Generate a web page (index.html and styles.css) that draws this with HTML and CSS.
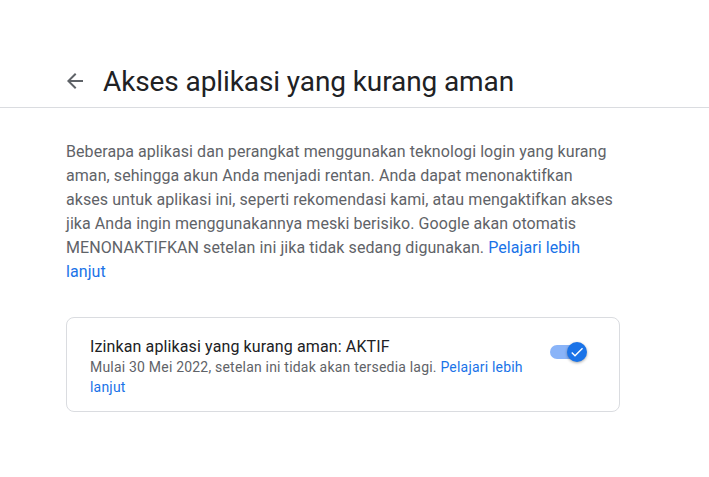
FILE: index.html
```html
<!DOCTYPE html>
<html>
<head>
  <meta charset="UTF-8">
  <title>Akses aplikasi yang kurang aman</title>
  <link rel="stylesheet" href="styles.css">
</head>
<body>
  <header class="top">
    <a class="back" href="#" aria-label="Kembali">
      <svg width="24" height="24" viewBox="0 0 24 24"><path d="M20 11H7.83l5.59-5.59L12 4l-8 8 8 8 1.41-1.41L7.83 13H20v-2z" fill="#5f6368"/></svg>
    </a>
    <h1>Akses aplikasi yang kurang aman</h1>
  </header>
  <main class="content">
    <p class="intro">Beberapa aplikasi dan perangkat menggunakan teknologi login yang kurang aman, sehingga akun Anda menjadi rentan. Anda dapat menonaktifkan<br>akses untuk aplikasi ini, seperti rekomendasi kami, atau mengaktifkan akses jika Anda ingin menggunakannya meski berisiko. Google akan otomatis MENONAKTIFKAN setelan ini jika tidak sedang digunakan. <a href="#">Pelajari lebih<br>lanjut</a></p>
    <div class="card">
      <div class="card-text">
        <div class="card-title">Izinkan aplikasi yang kurang aman: AKTIF</div>
        <div class="card-sub">Mulai 30 Mei 2022, setelan ini tidak akan tersedia lagi. <a href="#">Pelajari lebih lanjut</a></div>
      </div>
      <div class="switch">
        <div class="track"></div>
        <div class="knob">
          <svg width="16" height="16" viewBox="0 0 24 24"><path d="M9 16.17L4.83 12l-1.42 1.41L9 19 21 7l-1.41-1.41z" fill="#fff"/></svg>
        </div>
      </div>
    </div>
  </main>
</body>
</html>
```

FILE: styles.css
```css
body {
  margin: 0;
  background: #fff;
  font-family: Roboto, Arial, sans-serif;
  color: #202124;
}

a {
  color: #1a73e8;
  text-decoration: none;
}

.top {
  display: flex;
  align-items: center;
  height: 108px;
  padding: 55px 0 0 63px;
  box-sizing: border-box;
  border-bottom: 1px solid #dadce0;
}

.back {
  display: flex;
  width: 24px;
  height: 24px;
  margin-right: 16px;
}

h1 {
  margin: 0;
  font-family: Roboto, Arial, sans-serif;
  font-weight: 400;
  font-size: 28px;
  letter-spacing: -0.1px;
  color: #202124;
}

.content {
  width: 554px;
  padding: 32px 0 0 66px;
}

.intro {
  margin: 0;
  font-size: 16px;
  line-height: 24px;
  letter-spacing: 0.07px;
  color: #5f6368;
}

.card {
  display: flex;
  align-items: flex-start;
  margin-top: 33px;
  border: 1px solid #dadce0;
  border-radius: 8px;
  padding: 19px 32px 14px 23px;
}

.card-text {
  width: 440px;
}

.card-title {
  font-size: 16px;
  line-height: 20px;
  letter-spacing: 0.12px;
  color: #202124;
}

.card-sub {
  font-size: 14px;
  line-height: 20px;
  letter-spacing: 0.2px;
  color: #5f6368;
}

.switch {
  position: relative;
  width: 38px;
  height: 24px;
  margin-left: auto;
  margin-top: 3px;
}

.track {
  position: absolute;
  left: 1px;
  top: 5px;
  width: 30px;
  height: 14px;
  border-radius: 7px;
  background: #8ab4f8;
}

.knob {
  position: absolute;
  left: 18px;
  top: 2px;
  width: 20px;
  height: 20px;
  border-radius: 50%;
  background: #1a73e8;
  box-shadow: 0 1px 3px rgba(0, 0, 0, 0.35);
  display: flex;
  align-items: center;
  justify-content: center;
}
```
